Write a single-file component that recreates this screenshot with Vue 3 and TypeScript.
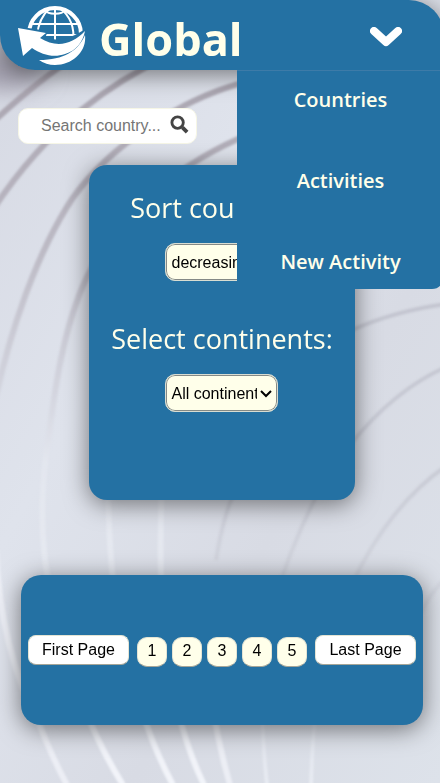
<script setup lang="ts">
import { ref } from 'vue'

interface Line {
  d: string
  tone: 'sweep' | 'pale' | 'light'
}

const links: string[] = ['Countries', 'Activities', 'New Activity']
const pages: number[] = [1, 2, 3, 4, 5]
const menuOpen = ref(true)
const search = ref('')
const order = ref('decreasing')
const continent = ref('All continents')

const lines: Line[] = [
  { d: 'M80 54C50 72 26 92 -6 121', tone: 'sweep' },
  { d: 'M170 55C112 82 50 124 -6 208', tone: 'sweep' },
  { d: 'M250 81C185 96 110 145 72 199C38 251 12 325 -4 396', tone: 'sweep' },
  { d: 'M250 134C170 166 108 226 82 288C58 346 53 410 46 455C40 505 42 550 49 585C58 640 70 680 92 726Q105 756 123 785', tone: 'sweep' },
  { d: 'M108 440C106 580 120 660 147 726Q158 757 173 785', tone: 'sweep' },
  { d: 'M164 440C156 580 162 660 182 726Q191 758 204 785', tone: 'sweep' },
  { d: 'M-4 550C-1 620 16 680 40 726Q52 757 67 785', tone: 'light' },
  { d: 'M210 690Q217 740 230 785', tone: 'light' },
  { d: 'M262 690Q262 740 267 785', tone: 'pale' },
  { d: 'M318 690Q312 740 311 785', tone: 'pale' },
  { d: 'M446 304Q394 311 350 331', tone: 'pale' },
  { d: 'M446 367Q394 390 350 445', tone: 'pale' },
  { d: 'M446 466Q390 505 353 582', tone: 'pale' },
  { d: 'M325 480Q300 525 281 580', tone: 'pale' },
  { d: 'M240 480Q224 510 216 560', tone: 'pale' },
  { d: 'M446 578Q422 600 412 640', tone: 'pale' },
]
</script>

<template>
  <div class="viewport">
    <svg class="backdrop" viewBox="0 0 440 783" preserveAspectRatio="none" aria-hidden="true">
      <defs>
        <linearGradient id="sheet" x1="0" y1="0" x2="1" y2="1">
          <stop offset="0" stop-color="#d6d9e3" />
          <stop offset="0.35" stop-color="#dfe3ec" />
          <stop offset="0.65" stop-color="#d8dbe4" />
          <stop offset="1" stop-color="#dde2ea" />
        </linearGradient>
        <linearGradient id="sweep" gradientUnits="userSpaceOnUse" x1="0" y1="70" x2="0" y2="783">
          <stop offset="0" stop-color="#a39da8" stop-opacity="0.9" />
          <stop offset="0.25" stop-color="#b4b0bb" stop-opacity="0.8" />
          <stop offset="0.45" stop-color="#ccccd6" stop-opacity="0.6" />
          <stop offset="0.55" stop-color="#e6e9f1" stop-opacity="0.6" />
          <stop offset="0.75" stop-color="#e9ecf3" stop-opacity="0.8" />
          <stop offset="1" stop-color="#f5f7fc" stop-opacity="0.9" />
        </linearGradient>
        <linearGradient id="fade" gradientUnits="userSpaceOnUse" x1="0" y1="300" x2="0" y2="783">
          <stop offset="0" stop-color="#b6b7c3" stop-opacity="0.6" />
          <stop offset="0.35" stop-color="#b9bac5" stop-opacity="0.5" />
          <stop offset="0.65" stop-color="#c6c8d2" stop-opacity="0.3" />
          <stop offset="0.9" stop-color="#e9ecf3" stop-opacity="0.5" />
          <stop offset="1" stop-color="#eef1f7" stop-opacity="0.7" />
        </linearGradient>
        <filter id="soft" x="-20%" y="-20%" width="140%" height="140%">
          <feGaussianBlur stdDeviation="1" />
        </filter>
        <filter id="cloud" x="-50%" y="-50%" width="200%" height="200%">
          <feGaussianBlur stdDeviation="12" />
        </filter>
      </defs>
      <rect width="440" height="783" fill="url(#sheet)" />
      <ellipse cx="4" cy="70" rx="40" ry="20" fill="#a09dac" filter="url(#cloud)" />
      <g filter="url(#soft)" fill="none">
        <path v-for="line in lines" :key="line.d" :d="line.d" :class="line.tone" />
      </g>
    </svg>

    <div class="page">
      <header class="header">
        <a class="brand" href="#">
          <svg class="logo" viewBox="0 0 68 62" aria-hidden="true">
            <circle cx="37" cy="30" r="26" fill="none" stroke="#fff" stroke-width="4" />
            <path d="M14 20H60M12 31H64M37 4V40M32 4C24 11 20 20 19 32M42 4C52 12 57 23 55 38M27 6C30 11 44 11 47 6" fill="none" stroke="#fff" stroke-width="2" />
            <path d="M-4 22L30 27L27 34C42 38 57 34 74 20L74 62H0Z" fill="#2471a3" />
            <path d="M0 24L28 29L22 34C38 44 54 41 67 27C65 38 58 47 47 50C36 54 24 51 14 44L5 52Z" fill="#fff" />
            <path d="M21 56C46 56 60 47 67 31C69 47 55 61 37 61Q28 61 21 56Z" fill="#fff" />
          </svg>
          <h1 class="title">Global</h1>
        </a>
        <button class="toggle" type="button" aria-label="Menu" :aria-expanded="menuOpen" @click="menuOpen = !menuOpen">
          <svg viewBox="0 0 32 20" aria-hidden="true">
            <path d="M4 4L16 15L28 4" fill="none" stroke="#fff" stroke-width="8" stroke-linecap="round" stroke-linejoin="round" />
          </svg>
        </button>
        <nav v-if="menuOpen" class="menu">
          <a v-for="link in links" :key="link" href="#">{{ link }}</a>
        </nav>
      </header>

      <main class="content">
        <form class="search" @submit.prevent>
          <input v-model="search" type="text" placeholder="Search country..." aria-label="Search country" />
          <button type="submit" aria-label="Search">
            <svg viewBox="0 0 20 20" aria-hidden="true">
              <circle cx="8" cy="8" r="6" fill="none" stroke="#444" stroke-width="3" />
              <path d="M13 13L18 18" stroke="#444" stroke-width="4" />
            </svg>
          </button>
        </form>

        <section class="card filters">
          <label for="order">Sort countries:</label>
          <div class="picker">
            <select id="order" v-model="order">
              <option>decreasing</option>
              <option>increasing</option>
            </select>
            <svg class="arrow" viewBox="0 0 12 8" aria-hidden="true"><path d="M1 1L6 6L11 1" /></svg>
          </div>
          <label for="continent">Select continents:</label>
          <div class="picker">
            <select id="continent" v-model="continent">
              <option>All continents</option>
              <option>Africa</option>
              <option>Europe</option>
            </select>
            <svg class="arrow" viewBox="0 0 12 8" aria-hidden="true"><path d="M1 1L6 6L11 1" /></svg>
          </div>
        </section>

        <nav class="card pager" aria-label="Pages">
          <button class="edge" type="button">First Page</button>
          <div class="numbers">
            <button v-for="page in pages" :key="page" type="button">{{ page }}</button>
          </div>
          <button class="edge" type="button">Last Page</button>
        </nav>
      </main>
    </div>
  </div>
</template>

<style>
body {
  margin: 0;
  background: #dadee7;
}
</style>

<style scoped>
.viewport {
  position: relative;
  min-height: 100vh;
  overflow: hidden;
  font-family: "Segoe UI", "Open Sans", "Noto Sans", sans-serif;
  color: #ffffea;
}
.backdrop {
  position: absolute;
  inset: 0;
  width: 100%;
  height: 100%;
}
.sweep { stroke: url(#sweep); stroke-width: 6; }
.pale { stroke: url(#fade); stroke-width: 4; }
.light { stroke: #f4f5fb; stroke-width: 6; opacity: 0.7; }
.page {
  position: relative;
  width: calc(100% + 4px);
}
.header {
  position: relative;
  z-index: 2;
  display: flex;
  align-items: center;
  justify-content: space-between;
  box-sizing: border-box;
  height: 70px;
  padding: 0 42px 0 18px;
  border-radius: 0 35px 0 35px;
  background: #2471a3;
  box-shadow: 0 4px 24px rgba(0, 0, 0, 0.5);
}
.brand {
  display: flex;
  align-items: center;
  gap: 13px;
  color: inherit;
  text-decoration: none;
}
.logo {
  width: 68px;
  height: 62px;
}
.title {
  margin: 0;
  padding-top: 7px;
  font-size: 45px;
  line-height: 63px;
  font-weight: 700;
}
.toggle {
  display: flex;
  padding: 0;
  border: 0;
  background: none;
}
.toggle svg {
  width: 32px;
  height: 20px;
  margin-top: 4px;
}
.menu {
  position: absolute;
  top: 100%;
  right: 0;
  display: flex;
  flex-direction: column;
  gap: 51px;
  box-sizing: border-box;
  width: 207px;
  padding: 14px 0 12px;
  border-top: 1px solid #3d7ba8;
  border-radius: 0 0 12px 0;
  background: #2471a3;
  text-align: center;
}
.menu a {
  color: inherit;
  font-size: 20px;
  line-height: 30px;
  font-weight: 600;
  text-decoration: none;
}
.content {
  display: flex;
  flex-direction: column;
  align-items: center;
  padding: 38px 0 56px;
}
.search {
  display: flex;
  align-items: center;
  align-self: flex-start;
  box-sizing: border-box;
  width: 179px;
  height: 36px;
  margin: 0 0 21px 18px;
  padding: 0 7px 0 22px;
  border: 1px solid #f6f6e6;
  border-radius: 10px;
  background: #fff;
}
.search input {
  flex: 1;
  min-width: 0;
  padding: 0;
  border: 0;
  outline: 0;
  background: none;
  font: 16px "Liberation Sans", Arial, sans-serif;
}
.search input::placeholder {
  color: #757575;
}
.search button {
  display: flex;
  padding: 0 0 4px;
  border: 0;
  background: none;
}
.search svg {
  width: 19px;
  height: 19px;
}
.card {
  box-sizing: border-box;
  background: #2471a3;
  box-shadow: 0 4px 24px rgba(0, 0, 0, 0.5);
}
.filters {
  display: flex;
  flex-direction: column;
  align-items: center;
  width: 60%;
  min-height: 335px;
  padding-top: 23px;
  border-radius: 18px;
}
.filters label {
  font-size: 27px;
  line-height: 40px;
  white-space: nowrap;
}
.picker {
  position: relative;
  margin: 15px 0 38px;
}
.picker select {
  display: block;
  appearance: none;
  box-sizing: border-box;
  width: 113px;
  height: 38px;
  padding: 0 20px 0 5px;
  border: 1px solid #d9ddd2;
  border-radius: 10px;
  background-color: #ffffea;
  box-shadow: inset 0 0 0 1px #858a86;
  color: #000;
  font: 16px "Liberation Sans", Arial, sans-serif;
}
.arrow {
  position: absolute;
  top: 16px;
  right: 6px;
  width: 12px;
  height: 8px;
  pointer-events: none;
}
.arrow path {
  fill: none;
  stroke: #000;
  stroke-width: 2;
}
.pager {
  display: flex;
  align-items: center;
  justify-content: space-between;
  width: calc(100% - 42px);
  min-height: 150px;
  margin-top: 75px;
  padding: 0 7px;
  border-radius: 20px;
}
.numbers {
  display: flex;
  gap: 5px;
  padding-top: 3px;
}
.pager button {
  box-sizing: border-box;
  width: 30px;
  height: 30px;
  padding: 0 0 1px;
  border: 1px solid #e4e4d4;
  border-bottom-color: #a5a598;
  border-radius: 10px;
  background: #ffffea;
  color: #000;
  font: 16px "Liberation Sans", Arial, sans-serif;
  white-space: nowrap;
}
.pager .edge {
  width: 101px;
  border-radius: 8px;
  background: #fff;
}
</style>
